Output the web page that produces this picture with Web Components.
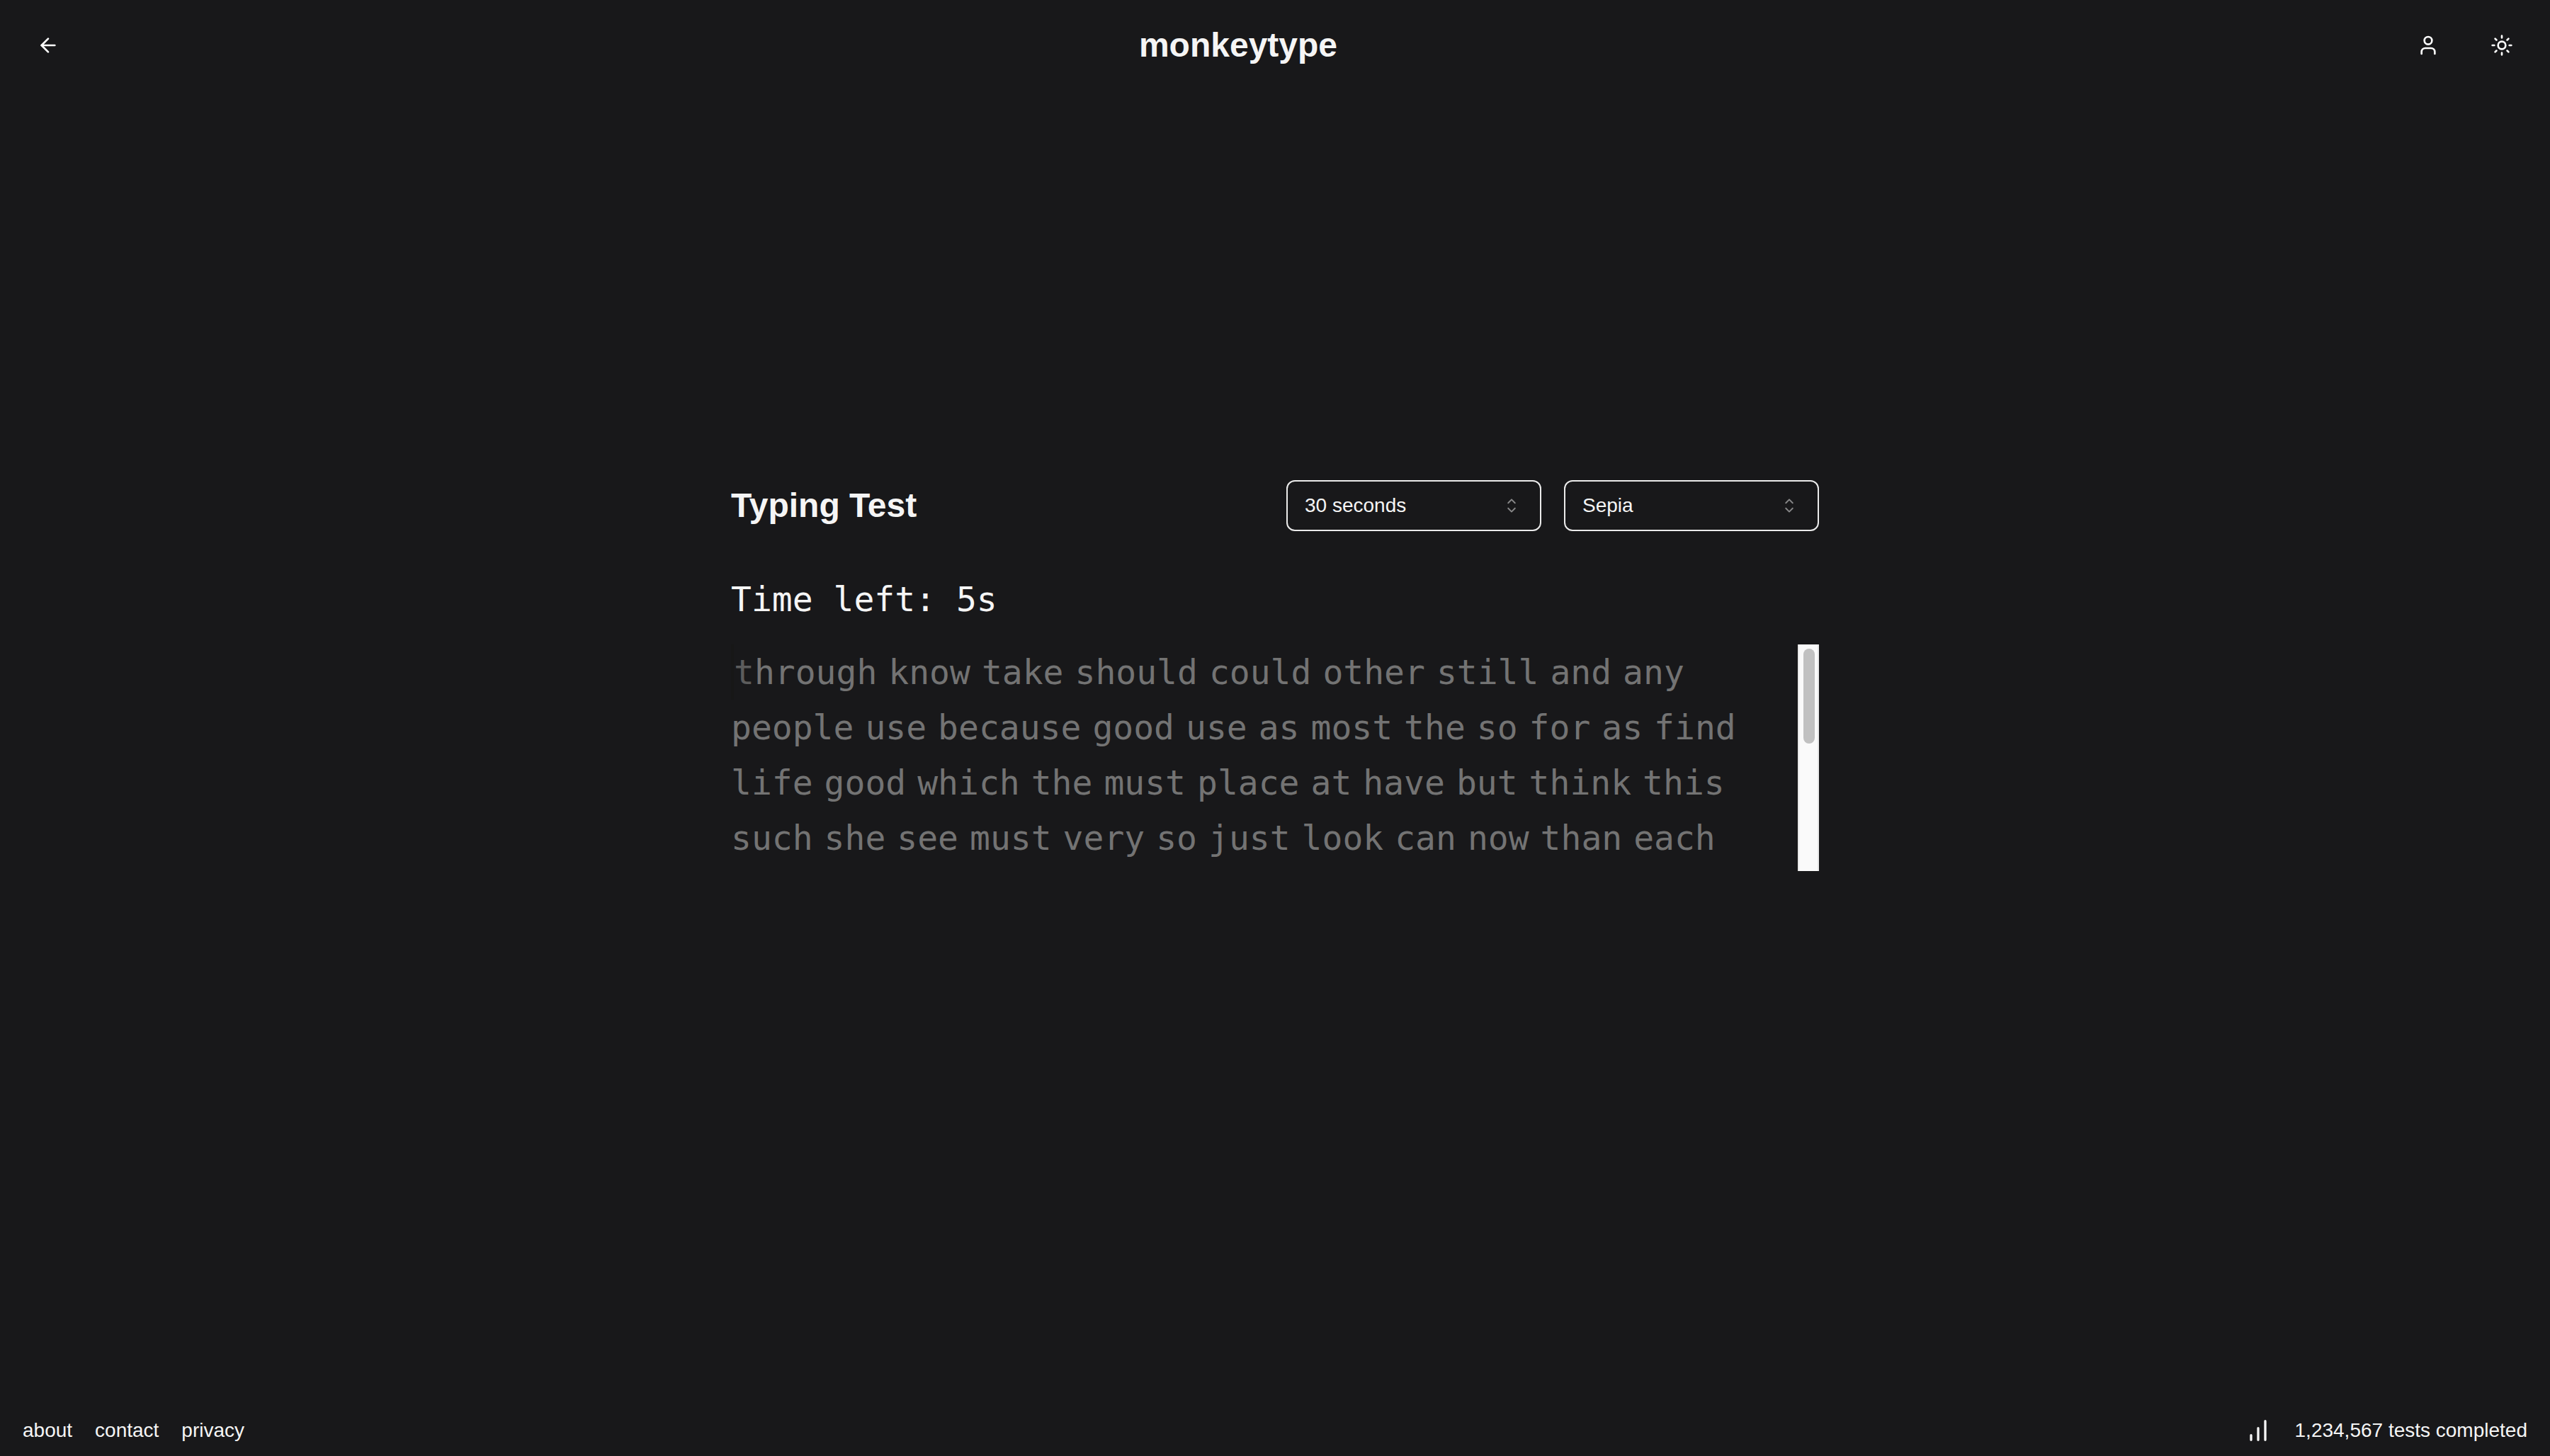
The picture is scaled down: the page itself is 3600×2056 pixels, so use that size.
<!DOCTYPE html>
<html lang="en">
<head>
<meta charset="utf-8">
<title>monkeytype</title>
<style>
html, body { margin: 0; height: 100%; background: #18181a; }
body { color: #f5f5f5; font-family: "Liberation Sans", Arial, sans-serif; font-size: 28px; line-height: 40px; }
</style>
</head>
<body>
<typing-app></typing-app>
<script>
const define = (name, html, setup) => {
  const template = document.createElement('template');
  template.innerHTML = html;
  customElements.define(name, class extends HTMLElement {
    connectedCallback() {
      if (this.shadowRoot) return;
      this.attachShadow({ mode: 'open' }).append(template.content.cloneNode(true));
      if (setup) setup(this, this.shadowRoot);
    }
  });
};

define('icon-button', `
<style>
:host { display: block; }
button { display: flex; align-items: center; justify-content: center; width: 72px; height: 72px; padding: 0; border: 0; border-radius: 12px; background: none; color: #ffffff; cursor: pointer; }
::slotted(svg) { width: 32px; height: 32px; fill: none; stroke: currentColor; stroke-width: 2; stroke-linecap: round; stroke-linejoin: round; }
</style>
<button type="button"><slot></slot></button>`,
(host, root) => root.querySelector('button').setAttribute('aria-label', host.getAttribute('label')));

define('app-header', `
<style>
:host { display: block; }
header { display: flex; align-items: center; justify-content: space-between; padding: 28px 32px; }
h1 { margin: 0; font-size: 48px; line-height: 64px; font-weight: 700; }
nav { display: flex; gap: 32px; }
</style>
<header>
  <icon-button label="Back"><svg viewBox="0 0 24 24"><path d="m12 19-7-7 7-7"/><path d="M19 12H5"/></svg></icon-button>
  <h1>monkeytype</h1>
  <nav>
    <icon-button label="Account"><svg viewBox="0 0 24 24"><path d="M19 21v-2a4 4 0 0 0-4-4H9a4 4 0 0 0-4 4v2"/><circle cx="12" cy="7" r="4"/></svg></icon-button>
    <icon-button label="Theme"><svg viewBox="0 0 24 24"><circle cx="12" cy="12" r="4"/><path d="M12 2v2M12 20v2M4.93 4.93l1.41 1.41M17.66 17.66l1.41 1.41M2 12h2M20 12h2M6.34 17.66l-1.41 1.41M19.07 4.93l-1.41 1.41"/></svg></icon-button>
  </nav>
</header>`);

define('select-box', `
<style>
:host { display: block; width: 360px; }
label { display: grid; align-items: center; }
select, svg { grid-area: 1 / 1; }
select { appearance: none; box-sizing: border-box; width: 100%; height: 72px; margin: 0; padding: 0 64px 0 24px; border: 2px solid #ebebeb; border-radius: 12px; background: transparent; color: inherit; font: inherit; }
option { background: #18181a; }
svg { justify-self: end; width: 32px; height: 32px; margin-right: 26px; opacity: .5; pointer-events: none; }
</style>
<label>
  <select></select>
  <svg viewBox="0 0 15 15" fill="currentColor" fill-rule="evenodd" aria-hidden="true"><path d="M4.93179 5.43179C4.75605 5.60753 4.75605 5.89245 4.93179 6.06819C5.10753 6.24392 5.39245 6.24392 5.56819 6.06819L7.49999 4.13638L9.43179 6.06819C9.60753 6.24392 9.89245 6.24392 10.0682 6.06819C10.2439 5.89245 10.2439 5.60753 10.0682 5.43179L7.81819 3.18179C7.73379 3.0974 7.61933 3.04999 7.49999 3.04999C7.38064 3.04999 7.26618 3.0974 7.18179 3.18179L4.93179 5.43179ZM10.0682 9.56819C10.2439 9.39245 10.2439 9.10753 10.0682 8.93179C9.89245 8.75606 9.60753 8.75606 9.43179 8.93179L7.49999 10.8636L5.56819 8.93179C5.39245 8.75606 5.10753 8.75606 4.93179 8.93179C4.75605 9.10753 4.75605 9.39245 4.93179 9.56819L7.18179 11.8182C7.35753 11.9939 7.64245 11.9939 7.81819 11.8182L10.0682 9.56819Z"/></svg>
</label>`,
(host, root) => {
  const select = root.querySelector('select');
  select.setAttribute('aria-label', host.getAttribute('label'));
  select.add(new Option(host.getAttribute('value')));
});

define('word-list', `
<style>
:host { display: flex; height: 320px; font-family: "DejaVu Sans Mono", monospace; font-size: 48px; line-height: 78px; color: #737373; }
.words { flex: 1; min-width: 0; overflow: hidden; }
.word { display: inline-block; margin-right: 16px; }
.current { border-left: 4px solid #171717; }
.current::first-letter { color: #5c5c5c; }
.track { box-sizing: border-box; width: 30px; padding: 6px; background: #fafafa; border: solid #e8e8e8; border-width: 0 2px; }
.thumb { width: 16px; height: 134px; border-radius: 8px; background: #c1c1c1; }
</style>
<div class="words"></div>
<div class="track"><div class="thumb"></div></div>`,
(host, root) => {
  const box = root.querySelector('.words');
  host.getAttribute('words').split(' ').forEach((text, i) => {
    const word = document.createElement('span');
    word.className = i ? 'word' : 'word current';
    word.textContent = text;
    box.append(word);
  });
});

define('typing-test', `
<style>
:host { display: flex; flex-direction: column; width: 100%; max-width: 1536px; }
.bar { display: flex; align-items: center; justify-content: space-between; margin-bottom: 64px; }
.options { display: flex; gap: 32px; }
h2 { margin: 0; font-size: 48px; line-height: 64px; font-weight: 700; }
.time { margin: 0 0 32px; font-family: "DejaVu Sans Mono", monospace; font-size: 48px; line-height: 64px; }
</style>
<div class="bar">
  <h2>Typing Test</h2>
  <div class="options">
    <select-box label="Duration" value="30 seconds"></select-box>
    <select-box label="Theme" value="Sepia"></select-box>
  </div>
</div>
<p class="time">Time left: 5s</p>
<word-list words="through know take should could other still and any people use because good use as most the so for as find life good which the must place at have but think this such she see must very so just look can now than each"></word-list>`);

define('app-footer', `
<style>
:host { display: block; }
footer, nav, .stats { display: flex; align-items: center; }
footer { justify-content: space-between; padding: 16px 32px; }
nav, .stats { gap: 32px; }
a { color: inherit; text-decoration: none; }
svg { width: 40px; height: 40px; fill: none; stroke: currentColor; stroke-width: 2; stroke-linecap: round; }
</style>
<footer>
  <nav><a href="#about">about</a><a href="#contact">contact</a><a href="#privacy">privacy</a></nav>
  <div class="stats">
    <svg viewBox="0 0 24 24" aria-hidden="true"><path d="M12 20V10M18 20V4M6 20v-4"/></svg>
    <span>1,234,567 tests completed</span>
  </div>
</footer>`);

define('typing-app', `
<style>
:host { display: flex; flex-direction: column; min-height: 100%; }
main { flex: 1; display: flex; align-items: center; justify-content: center; padding-bottom: 204px; }
</style>
<app-header></app-header>
<main><typing-test></typing-test></main>
<app-footer></app-footer>`);
</script>
</body>
</html>
